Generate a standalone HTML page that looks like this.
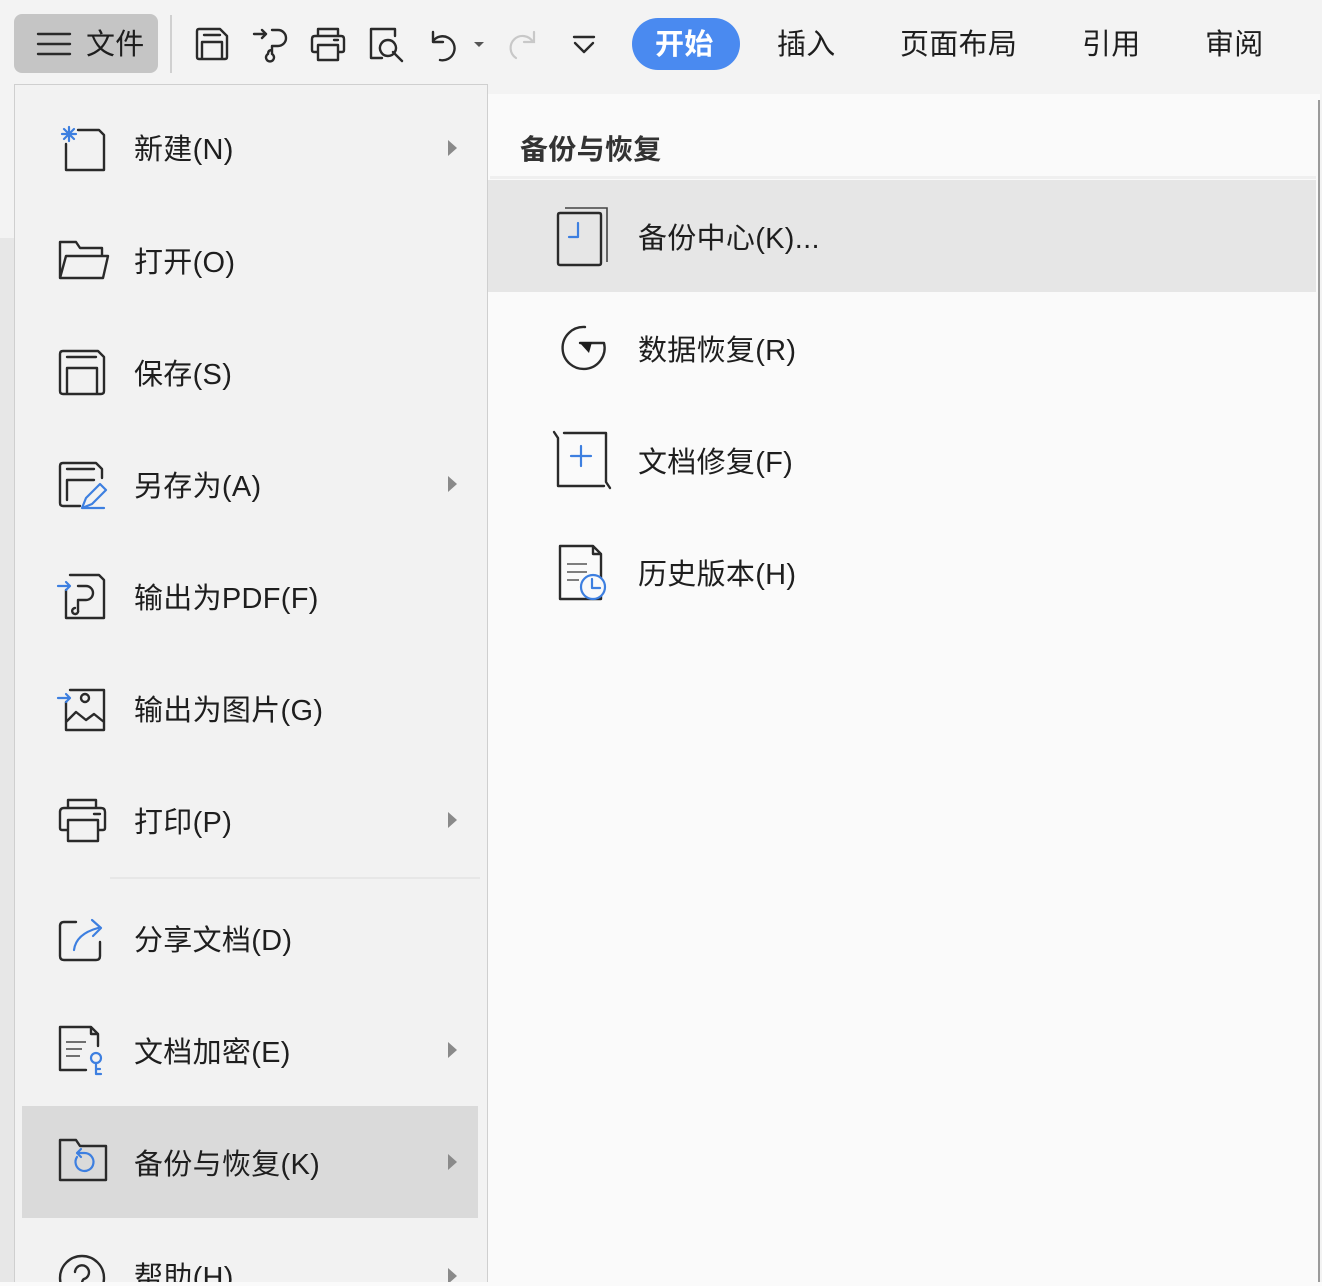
<!DOCTYPE html>
<html><head><meta charset="utf-8">
<style>
*{margin:0;padding:0;box-sizing:border-box}
html,body{width:1322px;height:1286px;overflow:hidden}
body{background:#f3f3f3;position:relative;font-family:"Liberation Sans","Noto Sans CJK SC",sans-serif;color:#222}
.a{position:absolute}
.t{position:absolute;font-size:29px;line-height:36px;white-space:nowrap;color:#1e1e1e;letter-spacing:0.3px}
svg{position:absolute;overflow:visible}
.s{fill:none;stroke:#2a2a2a;stroke-width:2.4;stroke-linecap:round;stroke-linejoin:round}
.b{fill:none;stroke:#3d7fe0;stroke-width:2.2;stroke-linecap:round;stroke-linejoin:round}
.arr{position:absolute;left:448px;width:0;height:0;border-left:9px solid #8a8a8a;border-top:8px solid transparent;border-bottom:8px solid transparent}
</style></head><body>
<div class="a" style="left:0;top:238px;width:14px;height:1048px;background:#e7e7e7"></div>
<!-- toolbar -->
<div class="a" style="left:14px;top:14px;width:144px;height:59px;background:#c5c5c5;border-radius:8px"></div>
<svg style="left:36px;top:30px" width="36" height="28"><path class="s" d="M2 4H34M2 14H34M2 24H34"/></svg>
<div class="t" style="left:86px;top:27px;font-size:29px">文件</div>
<div class="a" style="left:170px;top:15px;width:2px;height:58px;background:#d0d0d0"></div>
<svg style="left:194px;top:26px" width="36" height="36"><path class="s" d="M3 5Q3 3 5 3H26L33 10V31Q33 33 31 33H5Q3 33 3 31Z M8 33V16H28V33 M10 9H26"/></svg>
<svg style="left:252px;top:26px" width="40" height="40"><path class="s" d="M2 8H14M10 4L14 8L10 12 M20 4H26A8 8 0 0 1 26 20H20V28A4 4 0 1 1 16 28Q16 24 20 24"/></svg>
<svg style="left:310px;top:26px" width="36" height="36"><path class="s" d="M8 10V3H28V10 M5 10H31Q34 10 34 13V24Q34 26 32 26H28 M8 26H4Q2 26 2 24V13Q2 10 5 10 M8 19H28V34H8Z M24 14H28"/></svg>
<svg style="left:368px;top:26px" width="40" height="40"><path class="s" d="M14 32H3V3H27V10 M20 14A8 8 0 1 1 19.9 14Z M25 26L34 35"/></svg>
<svg style="left:430px;top:28px" width="40" height="36"><path class="s" d="M3 4V14H13 M3 13A12 12 0 1 1 10 32"/><path d="M44 14H54L49 19Z" fill="#555"/></svg>
<svg style="left:506px;top:30px" width="32" height="32"><path fill="none" stroke="#c8c8c8" stroke-width="2.2" stroke-linecap="round" d="M28 2V12H18 M27 12A12 12 0 1 0 10 28"/></svg>
<svg style="left:572px;top:34px" width="24" height="20"><path class="s" d="M2 3H22 M3 9L12 18L21 9"/></svg>
<div class="a" style="left:632px;top:18px;width:108px;height:52px;background:#4a8af0;border-radius:26px"></div>
<div class="t" style="left:655px;top:27px;color:#fff;font-weight:bold;font-size:29px">开始</div>
<div class="t" style="left:777px;top:27px;font-size:29px">插入</div>
<div class="t" style="left:900px;top:27px;font-size:29px">页面布局</div>
<div class="t" style="left:1082px;top:27px;font-size:29px">引用</div>
<div class="t" style="left:1205px;top:27px;font-size:29px">审阅</div>
<!-- right panel -->
<div class="a" style="left:487px;top:94px;width:833px;height:1192px;background:#fafafa"></div>
<div class="a" style="left:1318px;top:100px;width:2px;height:1186px;background:#9a9a9a"></div>
<div class="t" style="left:520px;top:132px;font-size:28px;font-weight:bold;color:#333">备份与恢复</div>
<div class="a" style="left:490px;top:176px;width:826px;height:3px;background:#efefef"></div>
<div class="a" style="left:488px;top:180px;width:828px;height:112px;background:#e6e6e6"></div>
<svg style="left:555px;top:205px" width="60" height="64"><path class="s" d="M3 10Q3 8 5 8H44Q46 8 46 10V58Q46 60 44 60H5Q3 60 3 58Z" stroke-width="2"/><path fill="none" stroke="#444" stroke-width="1.6" d="M10 3H52V57"/><path class="b" d="M23 18V32H14"/></svg>
<div class="t" style="left:638px;top:221px">备份中心(K)...</div>
<svg style="left:555px;top:322px" width="60" height="56"><path class="s" d="M30 5A21 21 0 1 0 49 21H25"/><path d="M24 20H37L34 31Z" fill="#1e1e1e"/></svg>
<div class="t" style="left:638px;top:333px">数据恢复(R)</div>
<svg style="left:550px;top:430px" width="64" height="60"><path class="s" d="M8 8V56H54 M8 8L4 2 M14 3H56V52L60 58" stroke-width="2.2"/><path class="b" d="M31 16V36M21 26H41"/></svg>
<div class="t" style="left:638px;top:445px">文档修复(F)</div>
<svg style="left:555px;top:542px" width="60" height="64"><path class="s" d="M5 4H38L46 12V57H5Z M38 4V12H46" stroke-width="2"/><path fill="none" stroke="#555" stroke-width="1.6" d="M12 22H32M12 30H32M12 38H24"/><circle cx="38" cy="45" r="12" fill="#fafafa" stroke="#3d7fe0" stroke-width="2.2"/><path class="b" d="M37 37V46H45"/></svg>
<div class="t" style="left:638px;top:557px">历史版本(H)</div>
<!-- left menu -->
<div class="a" style="left:14px;top:84px;width:474px;height:1202px;background:#f2f2f2;border:1px solid #cfcfcf;border-bottom:none"></div>
<div class="a" style="left:110px;top:877px;width:370px;height:2px;background:#e7e7e7"></div>
<div class="a" style="left:22px;top:1106px;width:456px;height:112px;background:#dadada"></div>

<svg style="left:56px;top:124px" width="54" height="50"><path class="s" d="M10 46V20 M22 6H43L48 11V46H10" stroke-width="2"/><path class="b" d="M13 3V17M6 10H20M8 5L18 15M18 5L8 15" stroke-width="1.6"/></svg>
<div class="t" style="left:134px;top:132px">新建(N)</div><div class="arr" style="top:140px"></div>

<svg style="left:56px;top:238px" width="54" height="50"><path class="s" d="M4 40V4H20L24 10H46V18 M4 40L10 18H52L47 40Z" stroke-width="2"/></svg>
<div class="t" style="left:134px;top:245px">打开(O)</div>

<svg style="left:56px;top:348px" width="54" height="50"><path class="s" d="M4 6Q4 3 7 3H42L48 9V43Q48 46 45 46H7Q4 46 4 43Z M11 46V20H41V46 M11 9H40" stroke-width="2"/></svg>
<div class="t" style="left:134px;top:357px">保存(S)</div>

<svg style="left:56px;top:460px" width="54" height="54"><path class="s" d="M4 6Q4 3 7 3H40L46 9V18 M24 46H7Q4 46 4 43V6 M11 40V20H38 M11 9H38" stroke-width="2"/><path class="b" d="M26 48L30 38L44 24L50 30L36 44Z M26 48H48"/></svg>
<div class="t" style="left:134px;top:469px">另存为(A)</div><div class="arr" style="top:476px"></div>

<svg style="left:56px;top:572px" width="54" height="50"><path class="s" d="M10 18V46H48V8L43 3H14 M22 14H30A7 7 0 0 1 30 28H22V38A3 3 0 1 1 19 36" stroke-width="2"/><path class="b" d="M2 14H14M10 10L14 14L10 18" stroke-width="1.8"/></svg>
<div class="t" style="left:134px;top:581px">输出为PDF(F)</div>

<svg style="left:56px;top:684px" width="54" height="50"><path class="s" d="M10 18V46H48V6H14 M10 38L20 28L30 36L38 30L48 38" stroke-width="2"/><circle cx="29" cy="14" r="4" class="s" stroke-width="2"/><path class="b" d="M2 14H14M10 10L14 14L10 18" stroke-width="1.8"/></svg>
<div class="t" style="left:134px;top:693px">输出为图片(G)</div>

<svg style="left:56px;top:796px" width="54" height="50"><path class="s" d="M12 12V4H40V12 M8 12H45Q49 12 49 16V32Q49 34 47 34H42 M12 34H6Q4 34 4 32V16Q4 12 8 12 M12 24H42V45H12Z M38 18H44" stroke-width="2"/></svg>
<div class="t" style="left:134px;top:805px">打印(P)</div><div class="arr" style="top:812px"></div>

<svg style="left:56px;top:914px" width="54" height="50"><path class="s" d="M20 8H8Q4 8 4 12V42Q4 46 8 46H40Q44 46 44 42V28" stroke-width="2"/><path class="b" d="M18 36Q20 20 42 14 M36 6L45 14L37 22"/></svg>
<div class="t" style="left:134px;top:923px">分享文档(D)</div>

<svg style="left:56px;top:1024px" width="54" height="54"><path class="s" d="M4 3H35L42 10V22 M30 46H4V3 M35 3V10H42" stroke-width="2"/><path fill="none" stroke="#444" stroke-width="1.6" d="M10 18H30M10 25H26M10 32H24"/><circle cx="40" cy="34" r="5" class="b"/><path class="b" d="M40 39V50H45M40 45H44"/></svg>
<div class="t" style="left:134px;top:1035px">文档加密(E)</div><div class="arr" style="top:1042px"></div>

<svg style="left:56px;top:1136px" width="54" height="50"><path class="s" d="M4 44V4H20L24 10H50V44Z" stroke-width="2"/><path class="b" d="M21 21A9 9 0 1 0 28 17H21M25 13L21 17L25 21"/></svg>
<div class="t" style="left:134px;top:1147px">备份与恢复(K)</div><div class="arr" style="top:1154px"></div>

<svg style="left:56px;top:1252px" width="54" height="50"><circle cx="26" cy="26" r="22" class="s" stroke-width="2"/><path class="s" d="M19 20A7 7 0 1 1 28 27Q26 28 26 32" stroke-width="2"/></svg>
<div class="t" style="left:134px;top:1260px">帮助(H)</div><div class="arr" style="top:1268px"></div>
<div class="a" style="left:0;top:1282px;width:1322px;height:4px;background:#fafafa"></div>
</body></html>
